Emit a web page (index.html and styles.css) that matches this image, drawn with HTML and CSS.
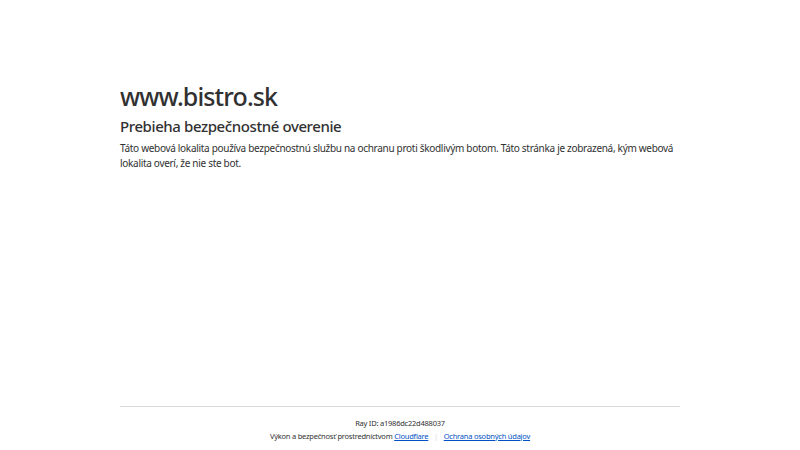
FILE: index.html
```html
<!DOCTYPE html>
<html lang="sk">
<head>
  <meta charset="UTF-8">
  <title>Len moment…</title>
  <meta name="viewport" content="width=device-width, initial-scale=1.0">
  <link rel="stylesheet" href="styles.css">
</head>
<body>

<div class="main-wrapper">
  <div class="main-content">
    <h1 class="zone-name-title">www.bistro.sk</h1>
    <h2 class="h2">Prebieha bezpečnostné overenie</h2>
    <p class="core-msg">Táto webová lokalita používa bezpečnostnú službu na ochranu proti škodlivým botom. Táto stránka je zobrazená, kým webová lokalita overí, že nie ste bot.</p>
  </div>
</div>

<div class="footer">
  <div class="footer-inner">
    <div class="text-center">Ray ID: <code>a1986dc22d488037</code></div>
    <div class="text-center">
      Výkon a bezpečnosť prostredníctvom <a href="#">Cloudflare</a>
      <span class="sep">|</span>
      <a href="#">Ochrana osobných údajov</a>
    </div>
  </div>
</div>

</body>
</html>
```

FILE: styles.css
```css
* {
  box-sizing: border-box;
  margin: 0;
  padding: 0;
}

html {
  line-height: 1.15;
  font-family: "Segoe UI", "Noto Sans", sans-serif;
  color: #313131;
}

body {
  display: flex;
  flex-direction: column;
  height: 100vh;
  min-height: 100vh;
  background: #fff;
}

.main-wrapper {
  display: flex;
  flex: 1;
  flex-direction: column;
  align-items: center;
}

.main-content {
  margin: 78px auto 0;
  max-width: 560px;
  width: 100%;
}

.zone-name-title {
  font-size: 25px;
  font-weight: 500;
  line-height: 37.5px;
  letter-spacing: -0.035em;
}

.h2 {
  font-size: 15px;
  font-weight: 500;
  line-height: 20px;
  letter-spacing: -0.027em;
}

.core-msg {
  font-size: 10px;
  line-height: 15px;
  margin-top: 5px;
  letter-spacing: -0.03em;
}

.footer {
  font-size: 7.5px;
  line-height: 12.5px;
  margin: 0 auto;
  max-width: 560px;
  width: 100%;
  letter-spacing: -0.03em;
}

.footer-inner {
  border-top: 1px solid #d9d9d9;
  padding: 10px 0 8px;
}

.text-center {
  text-align: center;
}

code {
  font-family: inherit;
}

.footer a {
  color: #0051c3;
}

.sep {
  color: #d9d9d9;
  margin: 0 4px;
}
```
